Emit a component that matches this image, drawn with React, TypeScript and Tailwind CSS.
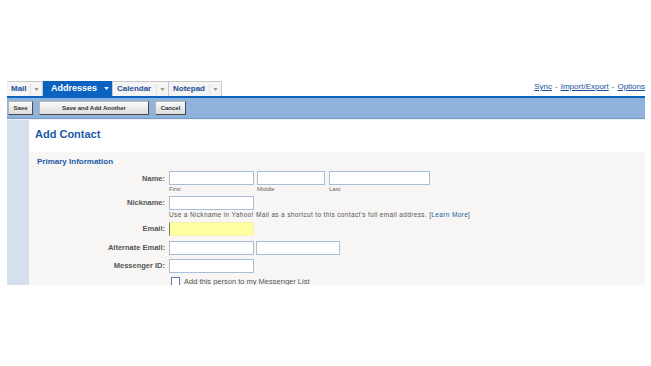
import React from 'react';

const font = { fontFamily: '"Liberation Sans", Arial, sans-serif' };

const Tab = ({ label, active, w }: { label: string; active?: boolean; w: string }) => (
  <div
    className={`flex h-[15px] items-center justify-between border-r border-t border-[#c9c9c9] pl-[4px] pr-[2px] ${w} ${
      active ? 'h-[16px] border-[#0b63c1] bg-[#0b63c1] text-white text-[9px]' : 'bg-[#f4f4f4] text-[#1d4f93] text-[8px]'
    }`}
  >
    <span className={`font-bold ${active ? 'pl-[4px]' : ''}`}>{label}</span>
    <span className={`flex h-[11px] items-center border-l pl-[3px] pr-[1px] ${active ? 'border-[#0b63c1]' : 'border-[#e2e2e2]'}`}>
      <svg width="5" height="3" viewBox="0 0 6 4">
        <path d="M0 0h6L3 4z" fill={active ? '#ffffff' : '#9a9a9a'} />
      </svg>
    </span>
  </div>
);

const Btn = ({ label, w }: { label: string; w: string }) => (
  <div
    className={`flex h-[14px] items-center justify-center border border-[#b5b5b5] border-b-[#4b4b4b] border-r-[#4b4b4b] bg-gradient-to-b from-[#fafafa] to-[#dcdcdc] text-[6px] font-bold text-[#333] ${w}`}
  >
    {label}
  </div>
);

const Input = ({ w, yellow }: { w: string; yellow?: boolean }) => (
  <div
    className={`h-[14px] shrink-0 border border-[#a9bdd6] ${w} ${
      yellow ? 'border-[#f3f3b0] border-l-[#777] bg-[#ffff9f]' : 'bg-white'
    }`}
  />
);

const Label = ({ children }: { children: React.ReactNode }) => (
  <div className="w-[140px] pr-[4px] text-right text-[7.5px] font-bold text-[#555]">{children}</div>
);

const Hint = ({ children }: { children: React.ReactNode }) => (
  <span className="pt-[1px] text-[6px] leading-[7px] text-[#666]">{children}</span>
);

export default function App() {
  return (
    <div className="h-[366px] w-[651px] bg-white" style={font}>
      <div className="pl-[7px] pt-[81px]">
        <div className="flex h-[204px] w-[638px] flex-col overflow-hidden">
          {/* tabs */}
          <div className="flex h-[15px] shrink-0 items-end">
            <Tab label="Mail" w="w-[36px]" />
            <Tab label="Addresses" active w="w-[70px]" />
            <Tab label="Calendar" w="w-[56px]" />
            <Tab label="Notepad" w="w-[53px]" />
            <div className="ml-auto flex items-center whitespace-nowrap pb-[3px] text-[8px] text-[#555]">
              <span className="text-[#1a4f9c] underline">Sync</span>
              <span className="px-[3px]">-</span>
              <span className="text-[#1a4f9c] underline">Import/Export</span>
              <span className="px-[3px]">-</span>
              <span className="text-[#1a4f9c] underline">Options</span>
            </div>
          </div>
          <div className="h-[2px] shrink-0 bg-[#0b63c1]" />
          {/* toolbar */}
          <div className="flex h-[21px] shrink-0 items-center gap-[6px] border-b border-[#7a9ac6] bg-[#8fb3dd] pl-[1px]">
            <Btn label="Save" w="w-[25px]" />
            <Btn label="Save and Add Another" w="w-[110px]" />
            <Btn label="Cancel" w="w-[31px]" />
          </div>
          <div className="flex flex-1 shrink-0 border-t border-[#eef1f5]">
            <div className="w-[22px] bg-[#d4e0ec]" />
            <div className="flex flex-1 flex-col">
              <div className="h-[32px] shrink-0 pl-[6px] pt-[6px] text-[11px] font-bold text-[#1a5ba6]">Add Contact</div>
              <div className="flex-1 bg-[#f7f6f4] pl-[8px] pt-[4px]">
                <div className="text-[8px] font-bold text-[#1a5ba6]">Primary Information</div>
                <div className="-ml-[8px] mt-[3px] flex flex-col">
                  <div className="flex items-start">
                    <div className="pt-[2px]"><Label>Name:</Label></div>
                    <div className="flex gap-[3px]">
                      <div className="flex flex-col">
                        <Input w="w-[85px]" />
                        <Hint>First</Hint>
                      </div>
                      <div className="flex flex-col">
                        <Input w="w-[68px]" />
                        <Hint>Middle</Hint>
                      </div>
                      <div className="ml-[1px] flex flex-col">
                        <Input w="w-[101px]" />
                        <Hint>Last</Hint>
                      </div>
                    </div>
                  </div>
                  <div className="mt-[3px] flex items-start">
                    <div className="pt-[1px]"><Label>Nickname:</Label></div>
                    <div className="flex flex-col">
                      <Input w="w-[85px]" />
                      <span className="whitespace-nowrap pt-[1px] text-[6.5px] leading-[7px] tracking-[0.35px] text-[#555]">
                        Use a Nickname in Yahoo! Mail as a shortcut to this contact's full email address.{' '}
                        [<span className="text-[#1a5ba6]">Learn More</span>]
                      </span>
                    </div>
                  </div>
                  <div className="mt-[4px] flex items-center">
                    <Label>Email:</Label>
                    <Input w="w-[85px]" yellow />
                  </div>
                  <div className="mt-[5px] flex items-center">
                    <Label>Alternate Email:</Label>
                    <div className="flex gap-[2px]">
                      <Input w="w-[85px]" />
                      <Input w="w-[84px]" />
                    </div>
                  </div>
                  <div className="mt-[4px] flex items-center">
                    <Label>Messenger ID:</Label>
                    <Input w="w-[85px]" />
                  </div>
                  <div className="mt-[4px] flex items-center pl-[142px]">
                    <div className="h-[9px] w-[9px] border border-[#5a7bb0] bg-white" />
                    <span className="pl-[4px] text-[7.5px] leading-[9px] text-[#555]">Add this person to my Messenger List</span>
                  </div>
                </div>
              </div>
            </div>
          </div>
        </div>
      </div>
    </div>
  );
}
